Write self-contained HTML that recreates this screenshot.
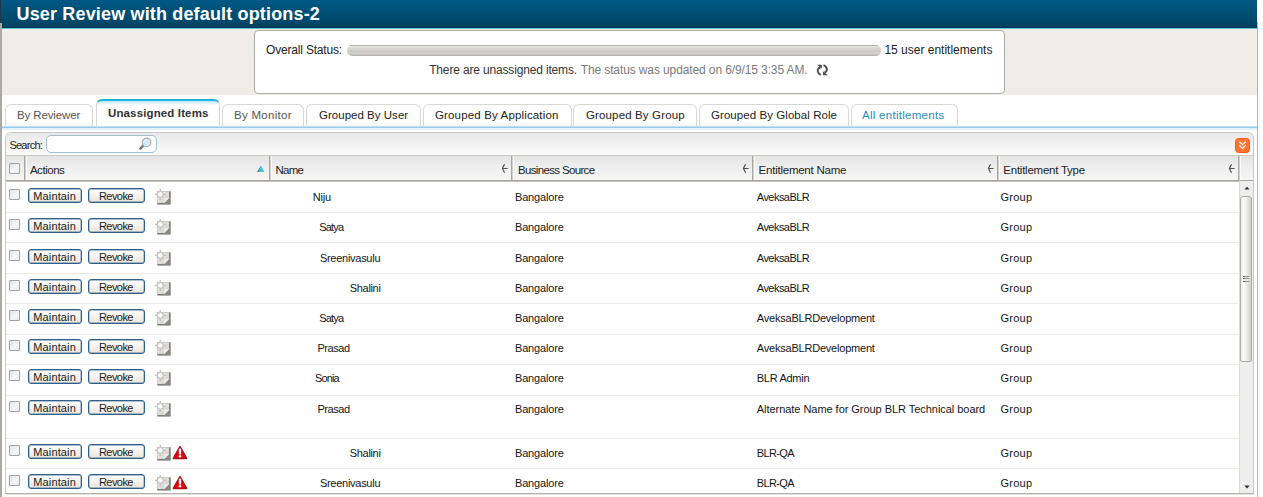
<!DOCTYPE html>
<html><head><meta charset="utf-8">
<style>
*{box-sizing:border-box;margin:0;padding:0}
html,body{width:1263px;height:497px;overflow:hidden;background:#fff;font-family:"Liberation Sans", sans-serif;color:#222}
.b{position:absolute}
.t{position:absolute;white-space:nowrap;line-height:1.15;font-family:"Liberation Sans", sans-serif}
</style></head><body>
<div class="b" style="left:0px;top:0px;width:1257px;height:28px;background:linear-gradient(#005885,#00486a 80%,#003b58)"></div>
<div class="b" style="left:0px;top:28px;width:1257px;height:1px;background:#5ec4cf"></div>
<div class="b" style="left:0px;top:29px;width:1257px;height:1px;background:#f6ebe4"></div>
<div class="t" style="left:16.5px;top:4px;font-size:18px;font-weight:bold;color:#fff;letter-spacing:0.16px;">User Review with default options-2</div>
<div class="b" style="left:0px;top:0px;width:1px;height:23px;background:#203a48"></div>
<div class="b" style="left:0px;top:23px;width:2px;height:474px;background:#aca8a2"></div>
<div class="b" style="left:1257px;top:22px;width:1px;height:475px;background:#b9b5b0"></div>
<div class="b" style="left:2px;top:29px;width:1255px;height:66px;background:#f0ede8"></div>
<div class="b" style="left:254px;top:30px;width:751px;height:64px;background:#fff;border:1px solid #aeaaa4;border-radius:4px"></div>
<div class="t" style="left:266px;top:44px;font-size:12px;font-weight:normal;color:#222;letter-spacing:-0.183px;">Overall Status:</div>
<div class="b" style="left:347px;top:45px;width:534px;height:11px;background:linear-gradient(#b4b0aa 0,#b4b0aa 1px,#e9e7e3 1px,#dcd9d4 3px,#cdc9c3 6px,#d6d3ce 9px,#b4b0aa 10px);border-radius:5px"></div>
<div class="t" style="left:884.4px;top:44px;font-size:12px;font-weight:normal;color:#222;letter-spacing:-0.003px;">15 user entitlements</div>
<div class="t" style="left:429.2px;top:64px;font-size:12px;font-weight:normal;color:#333;letter-spacing:-0.159px;">There are unassigned items.</div>
<div class="t" style="left:580.7px;top:64px;font-size:12px;font-weight:normal;color:#7a7a7a;letter-spacing:-0.113px;">The status was updated on 6/9/15 3:35 AM.</div>
<svg class="b" style="left:816px;top:64px" width="13" height="12" viewBox="0 0 13 12"><path d="M1 0.8 L5.8 0.8 L5.8 4.8 Z" fill="#4f4f4f"/><path d="M4.6 3.2 Q1.6 4.4 1.7 7 Q1.9 9.3 4.8 10.8" stroke="#4f4f4f" stroke-width="1.9" fill="none"/><path d="M7.4 1.2 Q10.4 2.2 10.9 5.2 Q10.9 7.6 8.4 8.6" stroke="#4f4f4f" stroke-width="1.9" fill="none"/><path d="M11.8 11.2 L7 11.2 L7 7.2 Z" fill="#4f4f4f"/></svg>
<div class="b" style="left:2px;top:95px;width:1255px;height:32px;background:#fff"></div>
<div class="b" style="left:5px;top:104px;width:88px;height:23px;background:linear-gradient(#fff,#fff 70%,#f8f6f2);border:1px solid #d9d7d3;border-bottom:none;border-radius:6px 6px 0 0"></div>
<div class="t" style="left:17px;top:109px;font-size:11.5px;font-weight:normal;color:#555;letter-spacing:-0.132px;">By Reviewer</div>
<div class="b" style="left:96px;top:99px;width:124px;height:28px;background:linear-gradient(#b8e4f4,#ffffff 4px);border:1px solid #d6d6d6;border-bottom:none;border-top:2px solid #20b2da;border-radius:6px 6px 0 0"></div>
<div class="t" style="left:108px;top:107px;font-size:11.5px;font-weight:bold;color:#333;letter-spacing:0.132px;">Unassigned Items</div>
<div class="b" style="left:222px;top:104px;width:82px;height:23px;background:linear-gradient(#fff,#fff 70%,#f8f6f2);border:1px solid #d9d7d3;border-bottom:none;border-radius:6px 6px 0 0"></div>
<div class="t" style="left:234px;top:109px;font-size:11.5px;font-weight:normal;color:#555;letter-spacing:0.285px;">By Monitor</div>
<div class="b" style="left:306px;top:104px;width:115px;height:23px;background:linear-gradient(#fff,#fff 70%,#f8f6f2);border:1px solid #d9d7d3;border-bottom:none;border-radius:6px 6px 0 0"></div>
<div class="t" style="left:319px;top:109px;font-size:11.5px;font-weight:normal;color:#222;letter-spacing:0.02px;">Grouped By User</div>
<div class="b" style="left:423px;top:104px;width:149px;height:23px;background:linear-gradient(#fff,#fff 70%,#f8f6f2);border:1px solid #d9d7d3;border-bottom:none;border-radius:6px 6px 0 0"></div>
<div class="t" style="left:435px;top:109px;font-size:11.5px;font-weight:normal;color:#222;letter-spacing:0.151px;">Grouped By Application</div>
<div class="b" style="left:573px;top:104px;width:124px;height:23px;background:linear-gradient(#fff,#fff 70%,#f8f6f2);border:1px solid #d9d7d3;border-bottom:none;border-radius:6px 6px 0 0"></div>
<div class="t" style="left:586px;top:109px;font-size:11.5px;font-weight:normal;color:#222;letter-spacing:0.138px;">Grouped By Group</div>
<div class="b" style="left:699px;top:104px;width:150px;height:23px;background:linear-gradient(#fff,#fff 70%,#f8f6f2);border:1px solid #d9d7d3;border-bottom:none;border-radius:6px 6px 0 0"></div>
<div class="t" style="left:711px;top:109px;font-size:11.5px;font-weight:normal;color:#222;letter-spacing:0.064px;">Grouped By Global Role</div>
<div class="b" style="left:851px;top:104px;width:107px;height:23px;background:linear-gradient(#fff,#fff 70%,#f8f6f2);border:1px solid #d9d7d3;border-bottom:none;border-radius:6px 6px 0 0"></div>
<div class="t" style="left:862px;top:109px;font-size:11.5px;font-weight:normal;color:#2a8cc0;letter-spacing:0.278px;">All entitlements</div>
<div class="b" style="left:2px;top:126px;width:1255px;height:1px;background:#bfe1f2"></div>
<div class="b" style="left:2px;top:127px;width:1255px;height:1px;background:#96cdee"></div>
<div class="b" style="left:2px;top:128px;width:1255px;height:2px;background:#e3f2fa"></div>
<div class="b" style="left:5px;top:132px;width:1249px;height:363px;background:#fff;border:1px solid #c9c9c9;border-bottom:none;border-radius:6px 6px 0 0"></div>
<div class="b" style="left:6px;top:133px;width:1247px;height:22px;background:linear-gradient(#e8e8e8,#f2f2f2 50%,#fbfbfb);border-radius:5px 5px 0 0"></div>
<div class="t" style="left:9.4px;top:139px;font-size:11px;font-weight:normal;color:#222;letter-spacing:-0.742px;">Search:</div>
<div class="b" style="left:46px;top:135px;width:111px;height:18px;background:#fff;border:1px solid #a2c0d4;border-radius:5px"></div>
<svg class="b" style="left:138px;top:137px" width="14" height="14" viewBox="0 0 14 14"><line x1="5.4" y1="8.4" x2="2.4" y2="11.6" stroke="#7a7a7a" stroke-width="2.6" stroke-linecap="round"/><circle cx="8.6" cy="5.4" r="4.3" fill="#d4eafa" stroke="#a8a8a8" stroke-width="1.1"/><path d="M6.2 4.2 A3 3 0 0 1 9 2.6" stroke="#fff" stroke-width="1" fill="none"/></svg>
<svg class="b" style="left:1235px;top:138px" width="15" height="15" viewBox="0 0 15 15"><rect x="0.5" y="0.5" width="14" height="14" rx="3" fill="#ff7433" stroke="#ff5a18"/><path d="M4.3 3.6 L7.5 6.6 L10.7 3.6 M4.3 7.4 L7.5 10.4 L10.7 7.4" stroke="#fff" stroke-width="1.3" fill="none"/></svg>
<div class="b" style="left:6px;top:155px;width:1247px;height:27px;background:linear-gradient(#e4e4e4,#efefef 45%,#f7f7f7);border-top:1px solid #cdc9c3"></div>
<div class="b" style="left:6px;top:180px;width:1247px;height:1px;background:#a8a5a0"></div>
<div class="b" style="left:6px;top:181px;width:1247px;height:1px;background:#c4c1bc"></div>
<div class="b" style="left:24px;top:156px;width:1px;height:24px;background:#a9a7a3"></div>
<div class="b" style="left:25px;top:156px;width:1px;height:24px;background:#d2d0cc"></div>
<div class="b" style="left:26px;top:156px;width:1px;height:24px;background:#fbfbfb"></div>
<div class="b" style="left:269px;top:156px;width:1px;height:24px;background:#a9a7a3"></div>
<div class="b" style="left:270px;top:156px;width:1px;height:24px;background:#d2d0cc"></div>
<div class="b" style="left:271px;top:156px;width:1px;height:24px;background:#fbfbfb"></div>
<div class="b" style="left:511px;top:156px;width:1px;height:24px;background:#a9a7a3"></div>
<div class="b" style="left:512px;top:156px;width:1px;height:24px;background:#d2d0cc"></div>
<div class="b" style="left:513px;top:156px;width:1px;height:24px;background:#fbfbfb"></div>
<div class="b" style="left:752px;top:156px;width:1px;height:24px;background:#a9a7a3"></div>
<div class="b" style="left:753px;top:156px;width:1px;height:24px;background:#d2d0cc"></div>
<div class="b" style="left:754px;top:156px;width:1px;height:24px;background:#fbfbfb"></div>
<div class="b" style="left:997px;top:156px;width:1px;height:24px;background:#a9a7a3"></div>
<div class="b" style="left:998px;top:156px;width:1px;height:24px;background:#d2d0cc"></div>
<div class="b" style="left:999px;top:156px;width:1px;height:24px;background:#fbfbfb"></div>
<div class="b" style="left:1238px;top:156px;width:1px;height:24px;background:#a9a7a3"></div>
<div class="b" style="left:1239px;top:156px;width:1px;height:24px;background:#d2d0cc"></div>
<div class="b" style="left:1240px;top:156px;width:1px;height:24px;background:#fbfbfb"></div>
<div class="b" style="left:9px;top:163px;width:11px;height:11px;background:linear-gradient(135deg,#dde3ea,#f6f6f6 60%,#e8e8e8);border:1px solid #a2a2a2;border-radius:1px"></div>
<div class="t" style="left:29.9px;top:164px;font-size:11.5px;font-weight:normal;color:#222;letter-spacing:-0.46px;">Actions</div>
<div class="t" style="left:275.5px;top:164px;font-size:11.5px;font-weight:normal;color:#222;letter-spacing:-0.727px;">Name</div>
<div class="t" style="left:517.9px;top:164px;font-size:11.5px;font-weight:normal;color:#222;letter-spacing:-0.65px;">Business Source</div>
<div class="t" style="left:758.6px;top:164px;font-size:11.5px;font-weight:normal;color:#222;letter-spacing:-0.24px;">Entitlement Name</div>
<div class="t" style="left:1003.3px;top:164px;font-size:11.5px;font-weight:normal;color:#222;letter-spacing:-0.244px;">Entitlement Type</div>
<svg class="b" style="left:256px;top:164px" width="9" height="9" viewBox="0 0 9 9"><path d="M5 1.5 L8.5 8 L1.2 8 Z" fill="#3cc8ec"/><path d="M5 1.5 L1.2 8 L2.6 8 Z" fill="#6a6a50"/></svg>
<svg class="b" style="left:501px;top:163px" width="8" height="11" viewBox="0 0 8 11"><path d="M3.6 1.4 Q2.2 3.6 1.4 5.4 Q2.2 7.4 3.6 9.6 M1.6 5.5 L6.6 5.5" stroke="#57524a" stroke-width="1.2" fill="none"/></svg>
<svg class="b" style="left:742px;top:163px" width="8" height="11" viewBox="0 0 8 11"><path d="M3.6 1.4 Q2.2 3.6 1.4 5.4 Q2.2 7.4 3.6 9.6 M1.6 5.5 L6.6 5.5" stroke="#57524a" stroke-width="1.2" fill="none"/></svg>
<svg class="b" style="left:987px;top:163px" width="8" height="11" viewBox="0 0 8 11"><path d="M3.6 1.4 Q2.2 3.6 1.4 5.4 Q2.2 7.4 3.6 9.6 M1.6 5.5 L6.6 5.5" stroke="#57524a" stroke-width="1.2" fill="none"/></svg>
<svg class="b" style="left:1228px;top:163px" width="8" height="11" viewBox="0 0 8 11"><path d="M3.6 1.4 Q2.2 3.6 1.4 5.4 Q2.2 7.4 3.6 9.6 M1.6 5.5 L6.6 5.5" stroke="#57524a" stroke-width="1.2" fill="none"/></svg>
<div class="b" style="left:9px;top:189px;width:11px;height:11px;background:linear-gradient(135deg,#dde3ea,#f6f6f6 60%,#e8e8e8);border:1px solid #a2a2a2;border-radius:1px"></div>
<div class="b" style="left:28px;top:188px;width:54px;height:15px;background:linear-gradient(#fefefd,#f6f3ee 50%,#ebe5d9);border:1px solid #30608a;border-radius:3px;box-shadow:inset 0 0 0 0.4px #5a82a4"></div>
<div class="b" style="left:88px;top:188px;width:57px;height:15px;background:linear-gradient(#fefefd,#f6f3ee 50%,#ebe5d9);border:1px solid #30608a;border-radius:3px;box-shadow:inset 0 0 0 0.4px #5a82a4"></div>
<div class="t" style="left:33.3px;top:190px;font-size:11px;font-weight:normal;color:#1a1a1a;letter-spacing:0.134px;">Maintain</div>
<div class="t" style="left:99px;top:190px;font-size:11px;font-weight:normal;color:#1a1a1a;letter-spacing:-0.576px;">Revoke</div>
<svg class="b" style="left:153px;top:187px" width="19" height="19" viewBox="0 0 19 19"><defs><linearGradient id="g0" x1="0" y1="0" x2="1" y2="1"><stop offset="0" stop-color="#f2f2f0"/><stop offset="0.6" stop-color="#d9d8d4"/><stop offset="1" stop-color="#aeaca8"/></linearGradient></defs><rect x="4.5" y="4.5" width="12.5" height="12.5" fill="url(#g0)" stroke="#c4c2be" stroke-width="0.8"/><path d="M16.8 4.5 V16.8 H4.5" stroke="#7f7d79" stroke-width="1.6" fill="none"/><path d="M16.6 10.5 L10.8 16.6 L16.6 16.6 Z" fill="#8d8b87"/><path d="M16.6 10.5 L10.8 16.6 L11 11 Z" fill="#eeedea"/><polygon points="7.30,2.00 6.53,5.55 4.26,4.36 5.45,6.63 1.90,7.40 5.45,8.17 4.26,10.44 6.53,9.25 7.30,12.80 8.07,9.25 10.34,10.44 9.15,8.17 12.70,7.40 9.15,6.63 10.34,4.36 8.07,5.55" fill="#fdfdfd" stroke="#bdbbb7" stroke-width="0.9"/><circle cx="7.3" cy="7.4" r="2.1" fill="#fff"/></svg>
<div class="t" style="left:312.8px;top:191px;font-size:11px;font-weight:normal;color:#151515;letter-spacing:-0.244px;">Niju</div>
<div class="t" style="left:515px;top:191px;font-size:11px;font-weight:normal;color:#151515;letter-spacing:-0.167px;">Bangalore</div>
<div class="t" style="left:756.8px;top:191px;font-size:11px;font-weight:normal;color:#151515;letter-spacing:-0.541px;">AveksaBLR</div>
<div class="t" style="left:1000.6px;top:191px;font-size:11px;font-weight:normal;color:#151515;letter-spacing:0.211px;">Group</div>
<div class="b" style="left:6px;top:212px;width:1233px;height:1px;background:#e9e9e7"></div>
<div class="b" style="left:9px;top:219px;width:11px;height:11px;background:linear-gradient(135deg,#dde3ea,#f6f6f6 60%,#e8e8e8);border:1px solid #a2a2a2;border-radius:1px"></div>
<div class="b" style="left:28px;top:218px;width:54px;height:15px;background:linear-gradient(#fefefd,#f6f3ee 50%,#ebe5d9);border:1px solid #30608a;border-radius:3px;box-shadow:inset 0 0 0 0.4px #5a82a4"></div>
<div class="b" style="left:88px;top:218px;width:57px;height:15px;background:linear-gradient(#fefefd,#f6f3ee 50%,#ebe5d9);border:1px solid #30608a;border-radius:3px;box-shadow:inset 0 0 0 0.4px #5a82a4"></div>
<div class="t" style="left:33.3px;top:220px;font-size:11px;font-weight:normal;color:#1a1a1a;letter-spacing:0.134px;">Maintain</div>
<div class="t" style="left:99px;top:220px;font-size:11px;font-weight:normal;color:#1a1a1a;letter-spacing:-0.576px;">Revoke</div>
<svg class="b" style="left:153px;top:217px" width="19" height="19" viewBox="0 0 19 19"><defs><linearGradient id="g1" x1="0" y1="0" x2="1" y2="1"><stop offset="0" stop-color="#f2f2f0"/><stop offset="0.6" stop-color="#d9d8d4"/><stop offset="1" stop-color="#aeaca8"/></linearGradient></defs><rect x="4.5" y="4.5" width="12.5" height="12.5" fill="url(#g1)" stroke="#c4c2be" stroke-width="0.8"/><path d="M16.8 4.5 V16.8 H4.5" stroke="#7f7d79" stroke-width="1.6" fill="none"/><path d="M16.6 10.5 L10.8 16.6 L16.6 16.6 Z" fill="#8d8b87"/><path d="M16.6 10.5 L10.8 16.6 L11 11 Z" fill="#eeedea"/><polygon points="7.30,2.00 6.53,5.55 4.26,4.36 5.45,6.63 1.90,7.40 5.45,8.17 4.26,10.44 6.53,9.25 7.30,12.80 8.07,9.25 10.34,10.44 9.15,8.17 12.70,7.40 9.15,6.63 10.34,4.36 8.07,5.55" fill="#fdfdfd" stroke="#bdbbb7" stroke-width="0.9"/><circle cx="7.3" cy="7.4" r="2.1" fill="#fff"/></svg>
<div class="t" style="left:319.2px;top:221px;font-size:11px;font-weight:normal;color:#151515;letter-spacing:-0.803px;">Satya</div>
<div class="t" style="left:515px;top:221px;font-size:11px;font-weight:normal;color:#151515;letter-spacing:-0.167px;">Bangalore</div>
<div class="t" style="left:756.8px;top:221px;font-size:11px;font-weight:normal;color:#151515;letter-spacing:-0.541px;">AveksaBLR</div>
<div class="t" style="left:1000.6px;top:221px;font-size:11px;font-weight:normal;color:#151515;letter-spacing:0.211px;">Group</div>
<div class="b" style="left:6px;top:242px;width:1233px;height:1px;background:#e9e9e7"></div>
<div class="b" style="left:9px;top:250px;width:11px;height:11px;background:linear-gradient(135deg,#dde3ea,#f6f6f6 60%,#e8e8e8);border:1px solid #a2a2a2;border-radius:1px"></div>
<div class="b" style="left:28px;top:249px;width:54px;height:15px;background:linear-gradient(#fefefd,#f6f3ee 50%,#ebe5d9);border:1px solid #30608a;border-radius:3px;box-shadow:inset 0 0 0 0.4px #5a82a4"></div>
<div class="b" style="left:88px;top:249px;width:57px;height:15px;background:linear-gradient(#fefefd,#f6f3ee 50%,#ebe5d9);border:1px solid #30608a;border-radius:3px;box-shadow:inset 0 0 0 0.4px #5a82a4"></div>
<div class="t" style="left:33.3px;top:251px;font-size:11px;font-weight:normal;color:#1a1a1a;letter-spacing:0.134px;">Maintain</div>
<div class="t" style="left:99px;top:251px;font-size:11px;font-weight:normal;color:#1a1a1a;letter-spacing:-0.576px;">Revoke</div>
<svg class="b" style="left:153px;top:248px" width="19" height="19" viewBox="0 0 19 19"><defs><linearGradient id="g2" x1="0" y1="0" x2="1" y2="1"><stop offset="0" stop-color="#f2f2f0"/><stop offset="0.6" stop-color="#d9d8d4"/><stop offset="1" stop-color="#aeaca8"/></linearGradient></defs><rect x="4.5" y="4.5" width="12.5" height="12.5" fill="url(#g2)" stroke="#c4c2be" stroke-width="0.8"/><path d="M16.8 4.5 V16.8 H4.5" stroke="#7f7d79" stroke-width="1.6" fill="none"/><path d="M16.6 10.5 L10.8 16.6 L16.6 16.6 Z" fill="#8d8b87"/><path d="M16.6 10.5 L10.8 16.6 L11 11 Z" fill="#eeedea"/><polygon points="7.30,2.00 6.53,5.55 4.26,4.36 5.45,6.63 1.90,7.40 5.45,8.17 4.26,10.44 6.53,9.25 7.30,12.80 8.07,9.25 10.34,10.44 9.15,8.17 12.70,7.40 9.15,6.63 10.34,4.36 8.07,5.55" fill="#fdfdfd" stroke="#bdbbb7" stroke-width="0.9"/><circle cx="7.3" cy="7.4" r="2.1" fill="#fff"/></svg>
<div class="t" style="left:319.9px;top:252px;font-size:11px;font-weight:normal;color:#151515;letter-spacing:-0.271px;">Sreenivasulu</div>
<div class="t" style="left:515px;top:252px;font-size:11px;font-weight:normal;color:#151515;letter-spacing:-0.167px;">Bangalore</div>
<div class="t" style="left:756.8px;top:252px;font-size:11px;font-weight:normal;color:#151515;letter-spacing:-0.541px;">AveksaBLR</div>
<div class="t" style="left:1000.6px;top:252px;font-size:11px;font-weight:normal;color:#151515;letter-spacing:0.211px;">Group</div>
<div class="b" style="left:6px;top:273px;width:1233px;height:1px;background:#e9e9e7"></div>
<div class="b" style="left:9px;top:280px;width:11px;height:11px;background:linear-gradient(135deg,#dde3ea,#f6f6f6 60%,#e8e8e8);border:1px solid #a2a2a2;border-radius:1px"></div>
<div class="b" style="left:28px;top:279px;width:54px;height:15px;background:linear-gradient(#fefefd,#f6f3ee 50%,#ebe5d9);border:1px solid #30608a;border-radius:3px;box-shadow:inset 0 0 0 0.4px #5a82a4"></div>
<div class="b" style="left:88px;top:279px;width:57px;height:15px;background:linear-gradient(#fefefd,#f6f3ee 50%,#ebe5d9);border:1px solid #30608a;border-radius:3px;box-shadow:inset 0 0 0 0.4px #5a82a4"></div>
<div class="t" style="left:33.3px;top:281px;font-size:11px;font-weight:normal;color:#1a1a1a;letter-spacing:0.134px;">Maintain</div>
<div class="t" style="left:99px;top:281px;font-size:11px;font-weight:normal;color:#1a1a1a;letter-spacing:-0.576px;">Revoke</div>
<svg class="b" style="left:153px;top:278px" width="19" height="19" viewBox="0 0 19 19"><defs><linearGradient id="g3" x1="0" y1="0" x2="1" y2="1"><stop offset="0" stop-color="#f2f2f0"/><stop offset="0.6" stop-color="#d9d8d4"/><stop offset="1" stop-color="#aeaca8"/></linearGradient></defs><rect x="4.5" y="4.5" width="12.5" height="12.5" fill="url(#g3)" stroke="#c4c2be" stroke-width="0.8"/><path d="M16.8 4.5 V16.8 H4.5" stroke="#7f7d79" stroke-width="1.6" fill="none"/><path d="M16.6 10.5 L10.8 16.6 L16.6 16.6 Z" fill="#8d8b87"/><path d="M16.6 10.5 L10.8 16.6 L11 11 Z" fill="#eeedea"/><polygon points="7.30,2.00 6.53,5.55 4.26,4.36 5.45,6.63 1.90,7.40 5.45,8.17 4.26,10.44 6.53,9.25 7.30,12.80 8.07,9.25 10.34,10.44 9.15,8.17 12.70,7.40 9.15,6.63 10.34,4.36 8.07,5.55" fill="#fdfdfd" stroke="#bdbbb7" stroke-width="0.9"/><circle cx="7.3" cy="7.4" r="2.1" fill="#fff"/></svg>
<div class="t" style="left:349.8px;top:282px;font-size:11px;font-weight:normal;color:#151515;letter-spacing:-0.33px;">Shalini</div>
<div class="t" style="left:515px;top:282px;font-size:11px;font-weight:normal;color:#151515;letter-spacing:-0.167px;">Bangalore</div>
<div class="t" style="left:756.8px;top:282px;font-size:11px;font-weight:normal;color:#151515;letter-spacing:-0.541px;">AveksaBLR</div>
<div class="t" style="left:1000.6px;top:282px;font-size:11px;font-weight:normal;color:#151515;letter-spacing:0.211px;">Group</div>
<div class="b" style="left:6px;top:303px;width:1233px;height:1px;background:#e9e9e7"></div>
<div class="b" style="left:9px;top:310px;width:11px;height:11px;background:linear-gradient(135deg,#dde3ea,#f6f6f6 60%,#e8e8e8);border:1px solid #a2a2a2;border-radius:1px"></div>
<div class="b" style="left:28px;top:309px;width:54px;height:15px;background:linear-gradient(#fefefd,#f6f3ee 50%,#ebe5d9);border:1px solid #30608a;border-radius:3px;box-shadow:inset 0 0 0 0.4px #5a82a4"></div>
<div class="b" style="left:88px;top:309px;width:57px;height:15px;background:linear-gradient(#fefefd,#f6f3ee 50%,#ebe5d9);border:1px solid #30608a;border-radius:3px;box-shadow:inset 0 0 0 0.4px #5a82a4"></div>
<div class="t" style="left:33.3px;top:311px;font-size:11px;font-weight:normal;color:#1a1a1a;letter-spacing:0.134px;">Maintain</div>
<div class="t" style="left:99px;top:311px;font-size:11px;font-weight:normal;color:#1a1a1a;letter-spacing:-0.576px;">Revoke</div>
<svg class="b" style="left:153px;top:308px" width="19" height="19" viewBox="0 0 19 19"><defs><linearGradient id="g4" x1="0" y1="0" x2="1" y2="1"><stop offset="0" stop-color="#f2f2f0"/><stop offset="0.6" stop-color="#d9d8d4"/><stop offset="1" stop-color="#aeaca8"/></linearGradient></defs><rect x="4.5" y="4.5" width="12.5" height="12.5" fill="url(#g4)" stroke="#c4c2be" stroke-width="0.8"/><path d="M16.8 4.5 V16.8 H4.5" stroke="#7f7d79" stroke-width="1.6" fill="none"/><path d="M16.6 10.5 L10.8 16.6 L16.6 16.6 Z" fill="#8d8b87"/><path d="M16.6 10.5 L10.8 16.6 L11 11 Z" fill="#eeedea"/><polygon points="7.30,2.00 6.53,5.55 4.26,4.36 5.45,6.63 1.90,7.40 5.45,8.17 4.26,10.44 6.53,9.25 7.30,12.80 8.07,9.25 10.34,10.44 9.15,8.17 12.70,7.40 9.15,6.63 10.34,4.36 8.07,5.55" fill="#fdfdfd" stroke="#bdbbb7" stroke-width="0.9"/><circle cx="7.3" cy="7.4" r="2.1" fill="#fff"/></svg>
<div class="t" style="left:319.2px;top:312px;font-size:11px;font-weight:normal;color:#151515;letter-spacing:-0.803px;">Satya</div>
<div class="t" style="left:515px;top:312px;font-size:11px;font-weight:normal;color:#151515;letter-spacing:-0.167px;">Bangalore</div>
<div class="t" style="left:756.8px;top:312px;font-size:11px;font-weight:normal;color:#151515;letter-spacing:-0.212px;">AveksaBLRDevelopment</div>
<div class="t" style="left:1000.6px;top:312px;font-size:11px;font-weight:normal;color:#151515;letter-spacing:0.211px;">Group</div>
<div class="b" style="left:6px;top:334px;width:1233px;height:1px;background:#e9e9e7"></div>
<div class="b" style="left:9px;top:340px;width:11px;height:11px;background:linear-gradient(135deg,#dde3ea,#f6f6f6 60%,#e8e8e8);border:1px solid #a2a2a2;border-radius:1px"></div>
<div class="b" style="left:28px;top:339px;width:54px;height:15px;background:linear-gradient(#fefefd,#f6f3ee 50%,#ebe5d9);border:1px solid #30608a;border-radius:3px;box-shadow:inset 0 0 0 0.4px #5a82a4"></div>
<div class="b" style="left:88px;top:339px;width:57px;height:15px;background:linear-gradient(#fefefd,#f6f3ee 50%,#ebe5d9);border:1px solid #30608a;border-radius:3px;box-shadow:inset 0 0 0 0.4px #5a82a4"></div>
<div class="t" style="left:33.3px;top:341px;font-size:11px;font-weight:normal;color:#1a1a1a;letter-spacing:0.134px;">Maintain</div>
<div class="t" style="left:99px;top:341px;font-size:11px;font-weight:normal;color:#1a1a1a;letter-spacing:-0.576px;">Revoke</div>
<svg class="b" style="left:153px;top:338px" width="19" height="19" viewBox="0 0 19 19"><defs><linearGradient id="g5" x1="0" y1="0" x2="1" y2="1"><stop offset="0" stop-color="#f2f2f0"/><stop offset="0.6" stop-color="#d9d8d4"/><stop offset="1" stop-color="#aeaca8"/></linearGradient></defs><rect x="4.5" y="4.5" width="12.5" height="12.5" fill="url(#g5)" stroke="#c4c2be" stroke-width="0.8"/><path d="M16.8 4.5 V16.8 H4.5" stroke="#7f7d79" stroke-width="1.6" fill="none"/><path d="M16.6 10.5 L10.8 16.6 L16.6 16.6 Z" fill="#8d8b87"/><path d="M16.6 10.5 L10.8 16.6 L11 11 Z" fill="#eeedea"/><polygon points="7.30,2.00 6.53,5.55 4.26,4.36 5.45,6.63 1.90,7.40 5.45,8.17 4.26,10.44 6.53,9.25 7.30,12.80 8.07,9.25 10.34,10.44 9.15,8.17 12.70,7.40 9.15,6.63 10.34,4.36 8.07,5.55" fill="#fdfdfd" stroke="#bdbbb7" stroke-width="0.9"/><circle cx="7.3" cy="7.4" r="2.1" fill="#fff"/></svg>
<div class="t" style="left:317.5px;top:342px;font-size:11px;font-weight:normal;color:#151515;letter-spacing:-0.467px;">Prasad</div>
<div class="t" style="left:515px;top:342px;font-size:11px;font-weight:normal;color:#151515;letter-spacing:-0.167px;">Bangalore</div>
<div class="t" style="left:756.8px;top:342px;font-size:11px;font-weight:normal;color:#151515;letter-spacing:-0.212px;">AveksaBLRDevelopment</div>
<div class="t" style="left:1000.6px;top:342px;font-size:11px;font-weight:normal;color:#151515;letter-spacing:0.211px;">Group</div>
<div class="b" style="left:6px;top:364px;width:1233px;height:1px;background:#e9e9e7"></div>
<div class="b" style="left:9px;top:370px;width:11px;height:11px;background:linear-gradient(135deg,#dde3ea,#f6f6f6 60%,#e8e8e8);border:1px solid #a2a2a2;border-radius:1px"></div>
<div class="b" style="left:28px;top:369px;width:54px;height:15px;background:linear-gradient(#fefefd,#f6f3ee 50%,#ebe5d9);border:1px solid #30608a;border-radius:3px;box-shadow:inset 0 0 0 0.4px #5a82a4"></div>
<div class="b" style="left:88px;top:369px;width:57px;height:15px;background:linear-gradient(#fefefd,#f6f3ee 50%,#ebe5d9);border:1px solid #30608a;border-radius:3px;box-shadow:inset 0 0 0 0.4px #5a82a4"></div>
<div class="t" style="left:33.3px;top:371px;font-size:11px;font-weight:normal;color:#1a1a1a;letter-spacing:0.134px;">Maintain</div>
<div class="t" style="left:99px;top:371px;font-size:11px;font-weight:normal;color:#1a1a1a;letter-spacing:-0.576px;">Revoke</div>
<svg class="b" style="left:153px;top:368px" width="19" height="19" viewBox="0 0 19 19"><defs><linearGradient id="g6" x1="0" y1="0" x2="1" y2="1"><stop offset="0" stop-color="#f2f2f0"/><stop offset="0.6" stop-color="#d9d8d4"/><stop offset="1" stop-color="#aeaca8"/></linearGradient></defs><rect x="4.5" y="4.5" width="12.5" height="12.5" fill="url(#g6)" stroke="#c4c2be" stroke-width="0.8"/><path d="M16.8 4.5 V16.8 H4.5" stroke="#7f7d79" stroke-width="1.6" fill="none"/><path d="M16.6 10.5 L10.8 16.6 L16.6 16.6 Z" fill="#8d8b87"/><path d="M16.6 10.5 L10.8 16.6 L11 11 Z" fill="#eeedea"/><polygon points="7.30,2.00 6.53,5.55 4.26,4.36 5.45,6.63 1.90,7.40 5.45,8.17 4.26,10.44 6.53,9.25 7.30,12.80 8.07,9.25 10.34,10.44 9.15,8.17 12.70,7.40 9.15,6.63 10.34,4.36 8.07,5.55" fill="#fdfdfd" stroke="#bdbbb7" stroke-width="0.9"/><circle cx="7.3" cy="7.4" r="2.1" fill="#fff"/></svg>
<div class="t" style="left:315.1px;top:372px;font-size:11px;font-weight:normal;color:#151515;letter-spacing:-0.879px;">Sonia</div>
<div class="t" style="left:515px;top:372px;font-size:11px;font-weight:normal;color:#151515;letter-spacing:-0.167px;">Bangalore</div>
<div class="t" style="left:756.8px;top:372px;font-size:11px;font-weight:normal;color:#151515;letter-spacing:-0.29px;">BLR Admin</div>
<div class="t" style="left:1000.6px;top:372px;font-size:11px;font-weight:normal;color:#151515;letter-spacing:0.211px;">Group</div>
<div class="b" style="left:6px;top:395px;width:1233px;height:1px;background:#e9e9e7"></div>
<div class="b" style="left:9px;top:401px;width:11px;height:11px;background:linear-gradient(135deg,#dde3ea,#f6f6f6 60%,#e8e8e8);border:1px solid #a2a2a2;border-radius:1px"></div>
<div class="b" style="left:28px;top:400px;width:54px;height:15px;background:linear-gradient(#fefefd,#f6f3ee 50%,#ebe5d9);border:1px solid #30608a;border-radius:3px;box-shadow:inset 0 0 0 0.4px #5a82a4"></div>
<div class="b" style="left:88px;top:400px;width:57px;height:15px;background:linear-gradient(#fefefd,#f6f3ee 50%,#ebe5d9);border:1px solid #30608a;border-radius:3px;box-shadow:inset 0 0 0 0.4px #5a82a4"></div>
<div class="t" style="left:33.3px;top:402px;font-size:11px;font-weight:normal;color:#1a1a1a;letter-spacing:0.134px;">Maintain</div>
<div class="t" style="left:99px;top:402px;font-size:11px;font-weight:normal;color:#1a1a1a;letter-spacing:-0.576px;">Revoke</div>
<svg class="b" style="left:153px;top:399px" width="19" height="19" viewBox="0 0 19 19"><defs><linearGradient id="g7" x1="0" y1="0" x2="1" y2="1"><stop offset="0" stop-color="#f2f2f0"/><stop offset="0.6" stop-color="#d9d8d4"/><stop offset="1" stop-color="#aeaca8"/></linearGradient></defs><rect x="4.5" y="4.5" width="12.5" height="12.5" fill="url(#g7)" stroke="#c4c2be" stroke-width="0.8"/><path d="M16.8 4.5 V16.8 H4.5" stroke="#7f7d79" stroke-width="1.6" fill="none"/><path d="M16.6 10.5 L10.8 16.6 L16.6 16.6 Z" fill="#8d8b87"/><path d="M16.6 10.5 L10.8 16.6 L11 11 Z" fill="#eeedea"/><polygon points="7.30,2.00 6.53,5.55 4.26,4.36 5.45,6.63 1.90,7.40 5.45,8.17 4.26,10.44 6.53,9.25 7.30,12.80 8.07,9.25 10.34,10.44 9.15,8.17 12.70,7.40 9.15,6.63 10.34,4.36 8.07,5.55" fill="#fdfdfd" stroke="#bdbbb7" stroke-width="0.9"/><circle cx="7.3" cy="7.4" r="2.1" fill="#fff"/></svg>
<div class="t" style="left:317.5px;top:403px;font-size:11px;font-weight:normal;color:#151515;letter-spacing:-0.467px;">Prasad</div>
<div class="t" style="left:515px;top:403px;font-size:11px;font-weight:normal;color:#151515;letter-spacing:-0.167px;">Bangalore</div>
<div class="t" style="left:756.8px;top:403px;font-size:11px;font-weight:normal;color:#151515;letter-spacing:-0.044px;">Alternate Name for Group BLR Technical board</div>
<div class="t" style="left:1000.6px;top:403px;font-size:11px;font-weight:normal;color:#151515;letter-spacing:0.211px;">Group</div>
<div class="b" style="left:6px;top:438px;width:1233px;height:1px;background:#e9e9e7"></div>
<div class="b" style="left:9px;top:445px;width:11px;height:11px;background:linear-gradient(135deg,#dde3ea,#f6f6f6 60%,#e8e8e8);border:1px solid #a2a2a2;border-radius:1px"></div>
<div class="b" style="left:28px;top:444px;width:54px;height:15px;background:linear-gradient(#fefefd,#f6f3ee 50%,#ebe5d9);border:1px solid #30608a;border-radius:3px;box-shadow:inset 0 0 0 0.4px #5a82a4"></div>
<div class="b" style="left:88px;top:444px;width:57px;height:15px;background:linear-gradient(#fefefd,#f6f3ee 50%,#ebe5d9);border:1px solid #30608a;border-radius:3px;box-shadow:inset 0 0 0 0.4px #5a82a4"></div>
<div class="t" style="left:33.3px;top:446px;font-size:11px;font-weight:normal;color:#1a1a1a;letter-spacing:0.134px;">Maintain</div>
<div class="t" style="left:99px;top:446px;font-size:11px;font-weight:normal;color:#1a1a1a;letter-spacing:-0.576px;">Revoke</div>
<svg class="b" style="left:153px;top:443px" width="19" height="19" viewBox="0 0 19 19"><defs><linearGradient id="g8" x1="0" y1="0" x2="1" y2="1"><stop offset="0" stop-color="#f2f2f0"/><stop offset="0.6" stop-color="#d9d8d4"/><stop offset="1" stop-color="#aeaca8"/></linearGradient></defs><rect x="4.5" y="4.5" width="12.5" height="12.5" fill="url(#g8)" stroke="#c4c2be" stroke-width="0.8"/><path d="M16.8 4.5 V16.8 H4.5" stroke="#7f7d79" stroke-width="1.6" fill="none"/><path d="M16.6 10.5 L10.8 16.6 L16.6 16.6 Z" fill="#8d8b87"/><path d="M16.6 10.5 L10.8 16.6 L11 11 Z" fill="#eeedea"/><polygon points="7.30,2.00 6.53,5.55 4.26,4.36 5.45,6.63 1.90,7.40 5.45,8.17 4.26,10.44 6.53,9.25 7.30,12.80 8.07,9.25 10.34,10.44 9.15,8.17 12.70,7.40 9.15,6.63 10.34,4.36 8.07,5.55" fill="#fdfdfd" stroke="#bdbbb7" stroke-width="0.9"/><circle cx="7.3" cy="7.4" r="2.1" fill="#fff"/></svg>
<svg class="b" style="left:172px;top:445px" width="16" height="16" viewBox="0 0 16 16"><path d="M8 1.6 L14.6 13.4 L1.4 13.4 Z" fill="#e80808" stroke="#b01018" stroke-width="1.6" stroke-linejoin="round"/><path d="M8 4.6 V8.6" stroke="#fff" stroke-width="2.3" stroke-linecap="round"/><circle cx="8" cy="11.2" r="1.25" fill="#fff"/></svg>
<div class="t" style="left:349.8px;top:447px;font-size:11px;font-weight:normal;color:#151515;letter-spacing:-0.33px;">Shalini</div>
<div class="t" style="left:515px;top:447px;font-size:11px;font-weight:normal;color:#151515;letter-spacing:-0.167px;">Bangalore</div>
<div class="t" style="left:756.8px;top:447px;font-size:11px;font-weight:normal;color:#151515;letter-spacing:-0.624px;">BLR-QA</div>
<div class="t" style="left:1000.6px;top:447px;font-size:11px;font-weight:normal;color:#151515;letter-spacing:0.211px;">Group</div>
<div class="b" style="left:6px;top:468px;width:1233px;height:1px;background:#e9e9e7"></div>
<div class="b" style="left:9px;top:475px;width:11px;height:11px;background:linear-gradient(135deg,#dde3ea,#f6f6f6 60%,#e8e8e8);border:1px solid #a2a2a2;border-radius:1px"></div>
<div class="b" style="left:28px;top:474px;width:54px;height:15px;background:linear-gradient(#fefefd,#f6f3ee 50%,#ebe5d9);border:1px solid #30608a;border-radius:3px;box-shadow:inset 0 0 0 0.4px #5a82a4"></div>
<div class="b" style="left:88px;top:474px;width:57px;height:15px;background:linear-gradient(#fefefd,#f6f3ee 50%,#ebe5d9);border:1px solid #30608a;border-radius:3px;box-shadow:inset 0 0 0 0.4px #5a82a4"></div>
<div class="t" style="left:33.3px;top:476px;font-size:11px;font-weight:normal;color:#1a1a1a;letter-spacing:0.134px;">Maintain</div>
<div class="t" style="left:99px;top:476px;font-size:11px;font-weight:normal;color:#1a1a1a;letter-spacing:-0.576px;">Revoke</div>
<svg class="b" style="left:153px;top:473px" width="19" height="19" viewBox="0 0 19 19"><defs><linearGradient id="g9" x1="0" y1="0" x2="1" y2="1"><stop offset="0" stop-color="#f2f2f0"/><stop offset="0.6" stop-color="#d9d8d4"/><stop offset="1" stop-color="#aeaca8"/></linearGradient></defs><rect x="4.5" y="4.5" width="12.5" height="12.5" fill="url(#g9)" stroke="#c4c2be" stroke-width="0.8"/><path d="M16.8 4.5 V16.8 H4.5" stroke="#7f7d79" stroke-width="1.6" fill="none"/><path d="M16.6 10.5 L10.8 16.6 L16.6 16.6 Z" fill="#8d8b87"/><path d="M16.6 10.5 L10.8 16.6 L11 11 Z" fill="#eeedea"/><polygon points="7.30,2.00 6.53,5.55 4.26,4.36 5.45,6.63 1.90,7.40 5.45,8.17 4.26,10.44 6.53,9.25 7.30,12.80 8.07,9.25 10.34,10.44 9.15,8.17 12.70,7.40 9.15,6.63 10.34,4.36 8.07,5.55" fill="#fdfdfd" stroke="#bdbbb7" stroke-width="0.9"/><circle cx="7.3" cy="7.4" r="2.1" fill="#fff"/></svg>
<svg class="b" style="left:172px;top:475px" width="16" height="16" viewBox="0 0 16 16"><path d="M8 1.6 L14.6 13.4 L1.4 13.4 Z" fill="#e80808" stroke="#b01018" stroke-width="1.6" stroke-linejoin="round"/><path d="M8 4.6 V8.6" stroke="#fff" stroke-width="2.3" stroke-linecap="round"/><circle cx="8" cy="11.2" r="1.25" fill="#fff"/></svg>
<div class="t" style="left:319.9px;top:477px;font-size:11px;font-weight:normal;color:#151515;letter-spacing:-0.271px;">Sreenivasulu</div>
<div class="t" style="left:515px;top:477px;font-size:11px;font-weight:normal;color:#151515;letter-spacing:-0.167px;">Bangalore</div>
<div class="t" style="left:756.8px;top:477px;font-size:11px;font-weight:normal;color:#151515;letter-spacing:-0.624px;">BLR-QA</div>
<div class="t" style="left:1000.6px;top:477px;font-size:11px;font-weight:normal;color:#151515;letter-spacing:0.211px;">Group</div>
<div class="b" style="left:1239px;top:181px;width:14px;height:313px;background:#eeeeec;border-left:1px solid #dcdcda"></div>
<svg class="b" style="left:1243px;top:185px" width="8" height="6" viewBox="0 0 8 6"><path d="M1.3 4.6 L4 1.8 L6.7 4.6 Z" fill="#333"/></svg>
<div class="b" style="left:1240px;top:196px;width:12px;height:166px;background:linear-gradient(90deg,#efefed,#fbfbfa 30%,#e6e4e1 70%,#cfcdc9);border:1px solid #afada9;border-radius:3px 3px 2px 2px"></div>
<div class="b" style="left:1243px;top:276px;width:6px;height:1px;background:linear-gradient(90deg,#444,#888 40%,#999)"></div>
<div class="b" style="left:1243px;top:278px;width:6px;height:1px;background:linear-gradient(90deg,#444,#888 40%,#999)"></div>
<div class="b" style="left:1243px;top:281px;width:6px;height:1px;background:linear-gradient(90deg,#444,#888 40%,#999)"></div>
<svg class="b" style="left:1243px;top:484px" width="8" height="6" viewBox="0 0 8 6"><path d="M1.3 1.6 L4 4.4 L6.7 1.6 Z" fill="#333"/></svg>
<div class="b" style="left:5px;top:493px;width:1249px;height:1px;background:#b4b2ae"></div>
<div class="b" style="left:5px;top:494px;width:1249px;height:1px;background:#e4e2de"></div>
</body></html>
